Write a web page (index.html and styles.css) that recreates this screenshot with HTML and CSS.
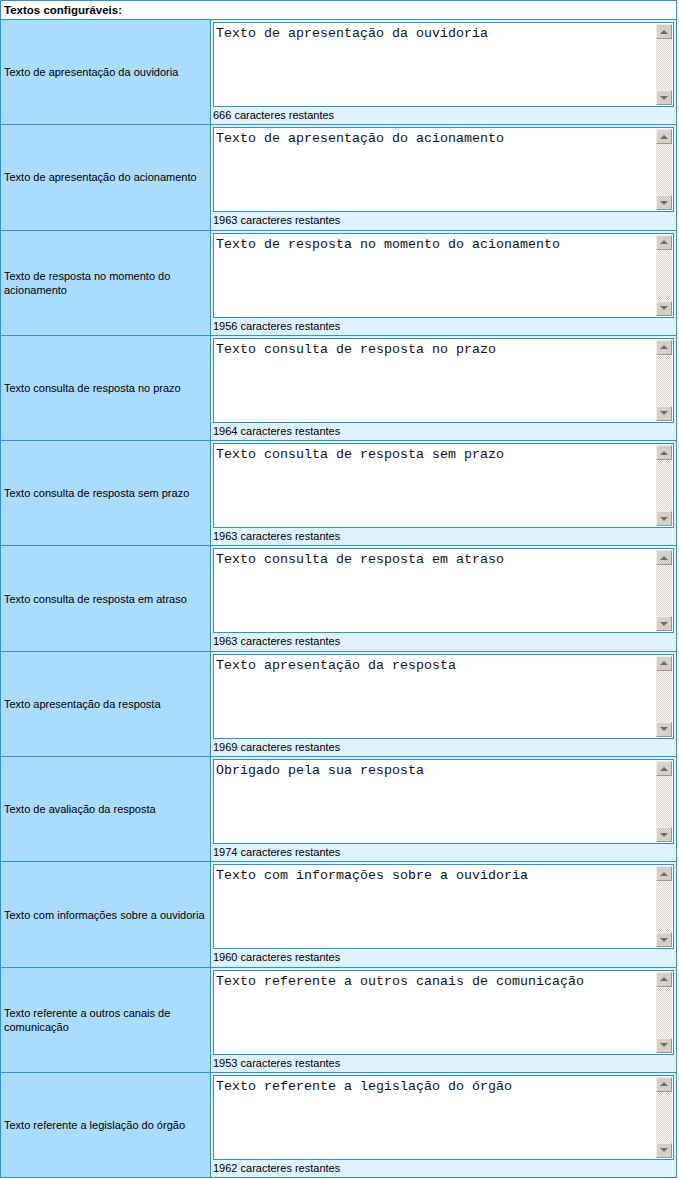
FILE: index.html
```html
<!DOCTYPE html>
<html lang="pt">
<head>
<meta charset="utf-8">
<title>Textos configuráveis</title>
<link rel="stylesheet" href="styles.css">
</head>
<body>
<div class="panel">
  <div class="header">Textos configuráveis:</div>

  <div class="row">
    <div class="label">Texto de apresentação da ouvidoria</div>
    <div class="value">
      <div class="box"><textarea class="text">Texto de apresentação da ouvidoria</textarea><div class="sb"><div class="btn up"></div><div class="track"></div><div class="btn down"></div></div></div>
      <div class="count">666 caracteres restantes</div>
    </div>
  </div>

  <div class="row">
    <div class="label">Texto de apresentação do acionamento</div>
    <div class="value">
      <div class="box"><textarea class="text">Texto de apresentação do acionamento</textarea><div class="sb"><div class="btn up"></div><div class="track"></div><div class="btn down"></div></div></div>
      <div class="count">1963 caracteres restantes</div>
    </div>
  </div>

  <div class="row">
    <div class="label">Texto de resposta no momento do acionamento</div>
    <div class="value">
      <div class="box"><textarea class="text">Texto de resposta no momento do acionamento</textarea><div class="sb"><div class="btn up"></div><div class="track"></div><div class="btn down"></div></div></div>
      <div class="count">1956 caracteres restantes</div>
    </div>
  </div>

  <div class="row">
    <div class="label">Texto consulta de resposta no prazo</div>
    <div class="value">
      <div class="box"><textarea class="text">Texto consulta de resposta no prazo</textarea><div class="sb"><div class="btn up"></div><div class="track"></div><div class="btn down"></div></div></div>
      <div class="count">1964 caracteres restantes</div>
    </div>
  </div>

  <div class="row">
    <div class="label">Texto consulta de resposta sem prazo</div>
    <div class="value">
      <div class="box"><textarea class="text">Texto consulta de resposta sem prazo</textarea><div class="sb"><div class="btn up"></div><div class="track"></div><div class="btn down"></div></div></div>
      <div class="count">1963 caracteres restantes</div>
    </div>
  </div>

  <div class="row">
    <div class="label">Texto consulta de resposta em atraso</div>
    <div class="value">
      <div class="box"><textarea class="text">Texto consulta de resposta em atraso</textarea><div class="sb"><div class="btn up"></div><div class="track"></div><div class="btn down"></div></div></div>
      <div class="count">1963 caracteres restantes</div>
    </div>
  </div>

  <div class="row">
    <div class="label">Texto apresentação da resposta</div>
    <div class="value">
      <div class="box"><textarea class="text">Texto apresentação da resposta</textarea><div class="sb"><div class="btn up"></div><div class="track"></div><div class="btn down"></div></div></div>
      <div class="count">1969 caracteres restantes</div>
    </div>
  </div>

  <div class="row">
    <div class="label">Texto de avaliação da resposta</div>
    <div class="value">
      <div class="box"><textarea class="text">Obrigado pela sua resposta</textarea><div class="sb"><div class="btn up"></div><div class="track"></div><div class="btn down"></div></div></div>
      <div class="count">1974 caracteres restantes</div>
    </div>
  </div>

  <div class="row">
    <div class="label">Texto com informações sobre a ouvidoria</div>
    <div class="value">
      <div class="box"><textarea class="text">Texto com informações sobre a ouvidoria</textarea><div class="sb"><div class="btn up"></div><div class="track"></div><div class="btn down"></div></div></div>
      <div class="count">1960 caracteres restantes</div>
    </div>
  </div>

  <div class="row">
    <div class="label">Texto referente a outros canais de comunicação</div>
    <div class="value">
      <div class="box"><textarea class="text">Texto referente a outros canais de comunicação</textarea><div class="sb"><div class="btn up"></div><div class="track"></div><div class="btn down"></div></div></div>
      <div class="count">1953 caracteres restantes</div>
    </div>
  </div>

  <div class="row last">
    <div class="label">Texto referente a legislação do órgão</div>
    <div class="value">
      <div class="box"><textarea class="text">Texto referente a legislação do órgão</textarea><div class="sb"><div class="btn up"></div><div class="track"></div><div class="btn down"></div></div></div>
      <div class="count">1962 caracteres restantes</div>
    </div>
  </div>
</div>
</body>
</html>
```

FILE: styles.css
```css
html, body {
  margin: 0;
  padding: 0;
  background: #ffffff;
}

body {
  font-family: "Liberation Sans", Arial, sans-serif;
  font-size: 11px;
  color: #000000;
}

.panel {
  width: 675px;
  border: 1px solid #3090d0;
  background: #ffffff;
}

.header {
  height: 18px;
  line-height: 18px;
  padding-left: 3px;
  font-weight: bold;
  font-size: 11.5px;
  border-bottom: 1px solid #3090d0;
}

.row {
  display: grid;
  grid-template-columns: 210px 1fr;
  border-bottom: 1px solid #3090d0;
}

.row.last {
  border-bottom: none;
}

.label {
  box-sizing: border-box;
  background: #aadcfd;
  border-right: 1px solid #3090d0;
  padding: 0 3px;
  display: flex;
  align-items: center;
  line-height: 14px;
}

.value {
  background: #dff1fd;
  padding: 2px 2px 0 1px;
}

.box {
  margin-left: 1px;
  height: 83px;
  border: 1px solid #3090d0;
  background: #ffffff;
  display: flex;
}

.text {
  flex: 1;
  min-width: 0;
  border: none;
  outline: none;
  resize: none;
  overflow: hidden;
  margin: 0;
  padding: 3px 2px 0 2px;
  background: #ffffff;
  font-family: "Liberation Mono", "Courier New", monospace;
  font-size: 13.33px;
  line-height: 15px;
  color: #111111;
}

.sb {
  width: 16px;
  margin: 1px 1px 1px 0;
  display: flex;
  flex-direction: column;
}

.btn {
  box-sizing: border-box;
  height: 15px;
  background: #d4d0c8;
  border-top: 1px solid #eeece8;
  border-left: 1px solid #eeece8;
  border-right: 1px solid #9a978f;
  border-bottom: 1px solid #9a978f;
  display: flex;
  align-items: center;
  justify-content: center;
}

.btn::before {
  content: "";
  width: 0;
  height: 0;
  border-left: 4px solid transparent;
  border-right: 4px solid transparent;
}

.btn.up::before {
  border-bottom: 4px solid #6e6c68;
}

.btn.down::before {
  border-top: 4px solid #6e6c68;
}

.track {
  flex: 1;
  background: repeating-conic-gradient(#d4d0c8 0 25%, #ffffff 0 50%) 0 0 / 2px 2px;
}

.count {
  line-height: 17.3px;
  padding-left: 1px;
}
```
